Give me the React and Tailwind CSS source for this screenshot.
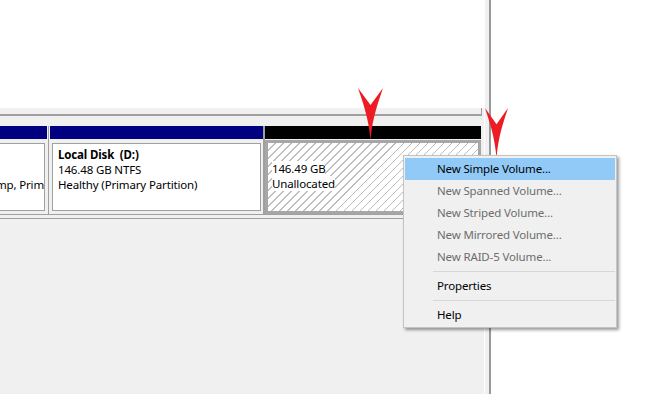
import React from 'react';

const Arrow = ({ className, w, h }) => (
  <svg className={className} width={w} height={h} viewBox="0 0 24 52" preserveAspectRatio="none">
    <path d="M0 0 L12 17 L24 0 C20 13 14 28 12 52 C10 28 4 13 0 0 Z" fill="#ed1c24" />
  </svg>
);

const menuItems = [
  { label: 'New Simple Volume...', active: true },
  { label: 'New Spanned Volume...', disabled: true },
  { label: 'New Striped Volume...', disabled: true },
  { label: 'New Mirrored Volume...', disabled: true },
  { label: 'New RAID-5 Volume...', disabled: true },
  { sep: true },
  { label: 'Properties' },
  { sep: true },
  { label: 'Help' },
];

export default function App() {
  return (
    <div className="relative flex h-[394px] w-[657px] overflow-hidden bg-white font-['Segoe_UI','Noto_Sans',sans-serif] text-[11.5px] tracking-[-0.15px] text-black">
      {/* disk management view */}
      <div className="flex w-[484px] flex-col">
        <div className="h-[108px] bg-white" />
        <div className="flex flex-1 flex-col bg-[#f0f0f0]">
          <div className="h-[8px] w-[482px] border-b-2 border-r border-[#a0a0a0]" />
          <div className="h-[10px]" />

          {/* partitions row */}
          <div className="flex h-[89px] w-[482px] border-b border-[#a0a0a0]">
            {/* C: scrolled out of view */}
            <div className="flex w-[47px] flex-col">
              <div className="h-[13px] bg-[#000080]" />
              <div className="flex-1 pb-[3px] pr-[2px] pt-[4px]">
                <div className="h-full overflow-hidden border border-l-0 border-[#a0a0a0] bg-white pt-[3px] leading-[15px]">
                  <div className="h-[15px]" />
                  <div className="h-[15px]" />
                  <div className="flex h-[15px] justify-end overflow-hidden">
                    <span className="shrink-0 whitespace-nowrap">Healthy (Boot, Page File, Crash Dump, Prim</span>
                  </div>
                </div>
              </div>
            </div>
            <div className="flex w-[3px] justify-center">
              <div className="w-px bg-[#a0a0a0]" />
            </div>

            {/* D: */}
            <div className="flex w-[213px] flex-col">
              <div className="h-[13px] bg-[#000080]" />
              <div className="flex-1 px-[2px] pb-[3px] pt-[4px]">
                <div className="h-full border border-[#a0a0a0] bg-white pl-[5px] pt-[3px] leading-[15px]">
                  <div className="whitespace-pre font-bold">Local Disk  (D:)</div>
                  <div>146.48 GB NTFS</div>
                  <div>Healthy (Primary Partition)</div>
                </div>
              </div>
            </div>
            <div className="w-[2px] bg-[#a0a0a0]" />

            {/* unallocated, selected */}
            <div className="flex w-[216px] flex-col">
              <div className="h-[13px] bg-black" />
              <div className="flex-1 pt-px">
                <div className="h-full border-[3px] border-[#a6a6a6] bg-white bg-[image:repeating-linear-gradient(135deg,#ffffff_0px,#ffffff_4.9px,#bdbdbd_4.9px,#bdbdbd_5.66px)] pl-[4px] pt-[18px] leading-[15px]">
                  <div className="w-fit bg-white">146.49 GB</div>
                  <div className="w-fit bg-white">Unallocated</div>
                </div>
              </div>
            </div>
          </div>
          <div className="h-[3px]" />
          <div className="h-px w-[482px] bg-[#a0a0a0]" />
        </div>
      </div>

      {/* window edge */}
      <div className="flex w-[7px]">
        <div className="w-px bg-white" />
        <div className="w-[4px] bg-[#f0f0f0]" />
        <div className="w-[2px] bg-[#999999]" />
      </div>
      <div className="flex-1 bg-white" />

      {/* pointers */}
      <Arrow className="absolute left-[358px] top-[88px]" w={25} h={52} />
      <Arrow className="absolute left-[485px] top-[108px]" w={23} h={50} />

      {/* context menu */}
      <div className="absolute left-[403px] top-[155px] w-[214px] border border-[#c4c4c4] bg-[#f0f0f0] px-px pb-px pt-[2px] shadow-[2px_2px_3px_rgba(0,0,0,0.4)]">
        {menuItems.map((item, i) =>
          item.sep ? (
            <div key={i} className="flex h-[7px] items-center pl-[28px]">
              <div className="h-px w-full bg-[#d7d7d7]" />
            </div>
          ) : (
            <div
              key={i}
              className={`flex h-[22px] items-center pl-[32px] ${item.active ? 'bg-[#91c9f7]' : ''} ${item.disabled ? 'text-[#6d6d6d]' : 'text-black'}`}
            >
              {item.label}
            </div>
          )
        )}
      </div>
    </div>
  );
}
